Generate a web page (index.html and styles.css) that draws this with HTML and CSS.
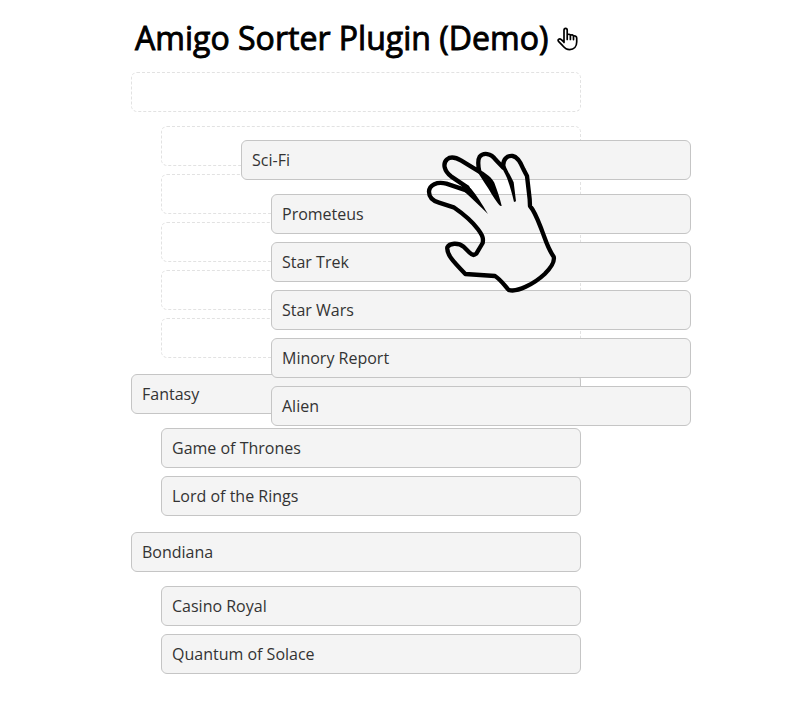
FILE: index.html
```html
<!DOCTYPE html>
<html lang="en">
<head>
<meta charset="utf-8">
<title>Amigo Sorter Plugin (Demo)</title>
<link rel="stylesheet" href="styles.css">
</head>
<body>
<main class="page">
  <h1 class="title">
    <span>Amigo Sorter Plugin (Demo)</span>
    <svg class="pointer" viewBox="0 0 22 24" width="22" height="24">
      <path d="M7 15.5V3.2C7 .8 10.2.8 10.2 3.2V8C11 6.8 13.2 7.1 13.4 8.4C14.5 7.5 16.2 7.8 16.5 9.2C18 8.5 19.7 9.2 19.7 11V15C19.7 19.5 17 22.6 12.7 22.6C9 22.6 7.4 20.8 5.7 18.7L1.5 14.4C.3 12.5 2.6 11.2 4 12.4L7 15M10.2 8V12.4M13.4 8.4V12.4M16.5 9.2V12.6"/>
    </svg>
  </h1>
  <ul class="sorter">
    <li class="group">
      <div class="slot"></div>
      <ul class="children">
        <li class="slot"></li>
        <li class="slot"></li>
        <li class="slot"></li>
        <li class="slot"></li>
        <li class="slot"></li>
      </ul>
    </li>
    <li class="group">
      <div class="item">Fantasy</div>
      <ul class="children">
        <li class="item">Game of Thrones</li>
        <li class="item">Lord of the Rings</li>
      </ul>
    </li>
    <li class="group">
      <div class="item">Bondiana</div>
      <ul class="children">
        <li class="item">Casino Royal</li>
        <li class="item">Quantum of Solace</li>
      </ul>
    </li>
  </ul>
  <div class="dragged group">
    <div class="item">Sci-Fi</div>
    <ul class="children">
      <li class="item">Prometeus</li>
      <li class="item">Star Trek</li>
      <li class="item">Star Wars</li>
      <li class="item">Minory Report</li>
      <li class="item">Alien</li>
    </ul>
  </div>
  <svg class="hand" viewBox="0 0 450 495" width="150" height="165">
    <path class="palm" d="M163 154L94 131C66 124 43 134 42 155C42 173 53 182 72 188L116 202C145 222 169 241 189 268C202 286 206 293 203 309L184 341C178 346 171 346 164 338L146 320C129 307 104 309 97 322C94 342 113 363 151 402L240 408C256 418 266 433 280 449C304 460 358 431 389 402C409 382 420 365 416 350C398 325 390 295 381 272C370 244 360 215 345 198L344 177L336 108L325 87C316 65 306 50 293 48C276 46 262 58 265 83L242 59C228 39 205 37 194 50C187 61 189 76 193 95L139 62C124 53 107 49 96 58C82 71 88 94 108 109L157 142Z"/>
    <path class="crease" d="M151 132L169 147C184 165 202 193 219 222C197 200 172 176 145 152ZM187 86C214 98 233 116 238 128C248 154 254 173 260 197C255 203 243 181 231 164C217 140 200 116 186 94ZM260 72L270 75C276 90 287 108 296 127L303 184L297 186C291 160 283 133 276 114C270 101 264 90 260 82Z"/>
  </svg>
</main>
</body>
</html>
```
FILE: styles.css
```css
* {
  box-sizing: border-box;
}

body {
  margin: 0;
  background: #fff;
  color: #333;
  font: 16px/24px "Open Sans", sans-serif;
}

ul {
  list-style: none;
  margin: 0;
  padding: 0;
}

.page {
  position: relative;
  width: 806px;
  height: 707px;
  padding: 16px 225px 0 131px;
}

.title {
  display: flex;
  align-items: center;
  gap: 8px;
  height: 44px;
  margin: 0 0 12px;
  padding-left: 4px;
  color: #000;
  font-size: 32.05px;
  font-weight: 400;
  line-height: 44px;
  white-space: nowrap;
  -webkit-text-stroke: 0.9px #000;
}

.pointer {
  flex: none;
  margin: 1px 0 0 1px;
  fill: #fff;
  stroke: #000;
  stroke-width: 1.7;
  stroke-linecap: round;
  stroke-linejoin: round;
}

.sorter {
  display: flex;
  flex-direction: column;
  gap: 16px;
}

.sorter,
.dragged {
  width: 450px;
}

.children {
  display: flex;
  flex-direction: column;
  gap: 8px;
  margin: 14px 0 0 30px;
}

.item,
.slot {
  height: 40px;
  border: 1px solid #c5c5c5;
  border-radius: 6px;
}

.item {
  padding: 7px 10px;
  background: #f4f4f4;
}

.slot {
  border: 1px dashed #e2e2e2;
}

.dragged {
  position: absolute;
  top: 140px;
  left: 241px;
}

.hand {
  position: absolute;
  top: 140px;
  left: 415px;
}

.palm {
  fill: none;
  stroke: #000;
  stroke-width: 13;
  stroke-linejoin: round;
}

.crease {
  fill: #000;
}
```
